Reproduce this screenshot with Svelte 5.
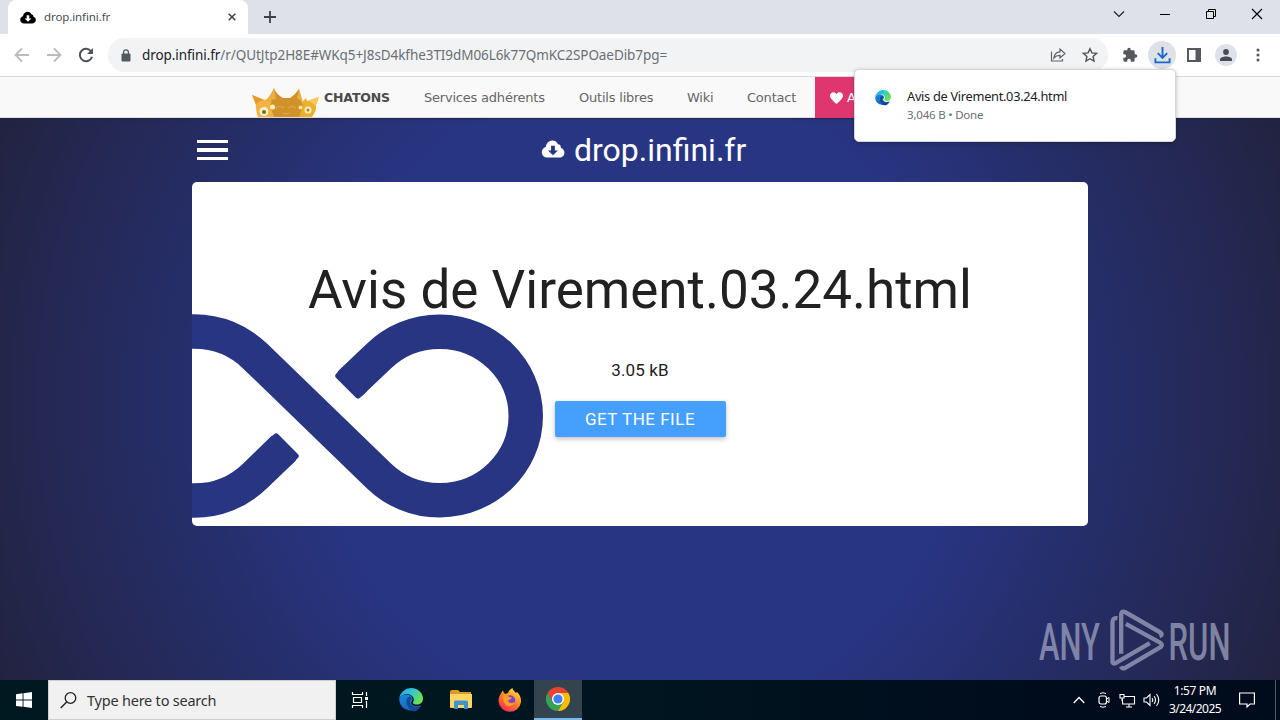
<script>
  const links = [
    { label: 'Services adhérents', width: 155 },
    { label: 'Outils libres', width: 108 },
    { label: 'Wiki', width: 60 },
    { label: 'Contact', width: 84 }
  ];
  const cloud =
    'M20.500 10.500Q21 7 17.500 6.500C16 1.500 8 1 5.500 6.500 4.500 8 5 9 4.500 9.500 1.500 10.500 0 13 .5 16 1 19 3.500 20.500 6 20.500H19c3 0 5.300-2 5.300-5 0-2.500-1.500-4.500-3.800-5zM17.500 13l-5.300 5-5.200-5h3.200V8h4v5z';
</script>

{#snippet edge(id)}
  <svg class="edge" viewBox="0 0 24 24">
    <defs>
      <linearGradient id="{id}a" x1="0" y1="0" x2="1" y2=".5">
        <stop offset="0" stop-color="#22a0ea" /><stop offset=".5" stop-color="#2fc5d6" /><stop offset="1" stop-color="#6ee052" />
      </linearGradient>
      <linearGradient id="{id}b" x1="0" y1="0" x2=".7" y2="1">
        <stop offset="0" stop-color="#168bdc" /><stop offset="1" stop-color="#1561c0" />
      </linearGradient>
    </defs>
    <path fill="url(#{id}b)" d="M.2 12C.6 8 4.500 6 8.500 6.500c3.500.4 5.300 3 5 5.300-.3 1.200-1.300 1.700-1.300 3 0 2.700 4.500 4.800 10 2.200A12 12 0 0 1 .2 12z" />
    <path fill="#134a8f" d="M9.500 9C6 11 6.500 21 15 23.400c3-.7 5.500-2.800 7-5.700-4.500 2.500-11 1-11-3.700 0-2 1-2.500 1.500-3.500C12 9 11 8.500 9.500 9z" />
    <path fill="url(#{id}a)" d="M.2 11A12 12 0 0 1 12 0c7.500 0 12 5.500 12 10.500 0 4-3 6-6 6-2.800 0-4.200-1-4.200-1.800 0-.7 1-1.200 1-3C14.800 8.500 11.500 6 8 6 4.500 6 1.200 8 .2 11z" />
  </svg>
{/snippet}

<div class="screen">
  <div class="tabs">
    <div class="tab">
      <svg class="fav" viewBox="0 2 24.500 19"><path d={cloud} fill="#000" fill-rule="evenodd" /></svg>
      <span class="tabname">drop.infini.fr</span>
      <svg class="x" viewBox="0 0 8 8"><path d="M.7.7l6.600 6.600M7.300.7L.7 7.300" stroke="#45484c" stroke-width="1.600" /></svg>
    </div>
    <svg class="plus" viewBox="0 0 12 12"><path d="M6 0v12M0 6h12" stroke="#3c4043" stroke-width="1.800" /></svg>
    <div class="winbtns">
      <svg viewBox="0 0 12 12"><path d="M1 3.500l5 5 5-5" stroke="#222" stroke-width="1.200" fill="none" /></svg>
      <svg viewBox="0 0 12 12"><path d="M1 6.500h10" stroke="#000" /></svg>
      <svg viewBox="0 0 12 12"><path d="M1.500 3.500h7v7h-7zM3.500 3.500v-2h7v7h-2" stroke="#000" fill="none" /></svg>
      <svg viewBox="0 0 12 12"><path d="M1 1l10 10M11 1L1 11" stroke="#000" stroke-width="1.200" /></svg>
    </div>
  </div>

  <div class="toolbar">
    <svg class="nav" viewBox="0 0 16 16"><path d="M15 8H2M8 1.500L1.500 8 8 14.500" stroke="#b9bbbe" stroke-width="1.800" fill="none" /></svg>
    <svg class="nav" viewBox="0 0 16 16"><path d="M1 8h13M8 1.500L14.500 8 8 14.500" stroke="#b9bbbe" stroke-width="1.800" fill="none" /></svg>
    <svg class="nav" viewBox="0 0 16 16"><path d="M13.200 4.500A6.200 6.200 0 1 0 14 9.800" stroke="#505458" stroke-width="2" fill="none" /><path d="M15 1v6H9z" fill="#505458" /></svg>
    <div class="omni">
      <svg class="lock" viewBox="0 0 10 13"><rect x=".5" y="4.500" width="9" height="8" rx="1" fill="#55595e" /><path d="M2.600 5V3.200a2.400 2.400 0 0 1 4.800 0V5" fill="none" stroke="#55595e" stroke-width="1.300" /></svg>
      <span class="url"><b>drop.infini.fr</b><span class="path">/r/QUtJtp2H8E#WKq5+J8sD4kfhe3TI9dM06L6k77QmKC2SPOaeDib7pg=</span></span>
      <svg class="share" viewBox="0 0 16 16"><path d="M1.500 4.500v9.500h11v-2M3.800 11c.6-4 3-6 6.200-6.200V2l5 4.500-5 4.500V8.300C7.500 8.200 5.500 9 3.800 11z" fill="none" stroke="#5f6368" stroke-width="1.200" /></svg>
      <svg class="star" viewBox="0 0 16 16"><path d="M8 1.700l1.900 4.200 4.600.5-3.400 3.100.9 4.500L8 11.700 4 14l.9-4.500L1.500 6.400l4.600-.5z" fill="none" stroke="#505458" stroke-width="1.400" /></svg>
    </div>
    <svg class="puzzle" viewBox="0 0 24 24"><path fill="#55595e" d="M20.500 11H19V7a2 2 0 0 0-2-2h-4V3.500a2.500 2.500 0 0 0-5 0V5H4a2 2 0 0 0-2 2v3.800h1.500a2.700 2.700 0 0 1 0 5.400H2V20a2 2 0 0 0 2 2h3.800v-1.500a2.700 2.700 0 0 1 5.400 0V22H17a2 2 0 0 0 2-2v-4h1.500a2.500 2.500 0 0 0 0-5z" /></svg>
    <div class="dl"><svg viewBox="0 0 18 18"><path d="M9 0v11M4 6.500l5 5 5-5M1.500 12v4.300h15V12" fill="none" stroke="#1967d2" stroke-width="2" /></svg></div>
    <svg class="panel" viewBox="0 0 14 14"><path d="M1 1h12v12H1z" fill="none" stroke="#55595e" stroke-width="2" /><path d="M8.500 1H13v12H8.500z" fill="#55595e" /></svg>
    <div class="avatar"><svg viewBox="0 0 14 14"><circle cx="7" cy="4" r="2.900" fill="#494c57" /><path d="M1 13v-1.500C1 9.500 4 8.500 7 8.500s6 1 6 3V13z" fill="#494c57" /></svg></div>
    <svg class="dots" viewBox="0 0 4 14"><circle cx="2" cy="2" r="1.500" /><circle cx="2" cy="7" r="1.500" /><circle cx="2" cy="12" r="1.500" /></svg>
  </div>

  <div class="sitebar">
    <svg class="cats" viewBox="0 0 68 29">
      <path d="M0 7l13 5q3-1 5-5l10 22H6q-3-9-2-13z" fill="#f3b243" />
      <path d="M0 7l12 5q-6 1-8 5z" fill="#e59a2c" />
      <path d="M67 9l-12 4-1-3-3 3-9 16h18q5-7 4-12z" fill="#eab12f" />
      <path d="M67 9l-4 9q-2-4-7-5z" fill="#f6ca58" />
      <path d="M22 0q2 6 9 10h7q6-4 9-9l4 18-4 10H22q-4-10-3-14z" fill="#d1922b" />
      <path d="M22 0l-7 13 9-2zM47 1l4 13-6-4z" fill="#eaae42" />
      <circle cx="12" cy="23.500" r="4.500" fill="#fff0c4" /><circle cx="12" cy="24" r="2" fill="#7b6534" />
      <circle cx="20.500" cy="19" r="2.500" fill="#fff0c4" /><circle cx="56" cy="22" r="3.500" fill="#fff0c4" /><circle cx="56" cy="22" r="1.500" fill="#a1802f" />
      <circle cx="48.500" cy="19.500" r="2" fill="#ffe5a0" />
      <path d="M24 20q4-3 8 0M36 20q4-3 8 0M31 25l3 1 3-1" fill="none" stroke="#e0aa45" stroke-width="1.200" />
    </svg>
    <b class="chatons">CHATONS</b>
    {#each links as l}<a style:width="{l.width}px">{l.label}</a>{/each}
    <div class="adhere"><svg viewBox="0 0 24 22"><path fill="#fff" d="M12 22C5 16 0 12 0 6.500 0 0 9-2.500 12 4c3-6.500 12-4 12 2.500C24 12 19 16 12 22z" /></svg>Adhérer</div>
  </div>

  <main>
    <header>
      <div class="burger"><i></i><i></i><i></i></div>
      <div class="brand"><svg viewBox="0 2 24.500 19"><path d={cloud} fill="#fff" fill-rule="evenodd" /></svg><span>drop.infini.fr</span></div>
    </header>
    <section>
      <svg class="infinity" viewBox="192 310 356 212">
        <g fill="none" stroke="#283583" stroke-width="34.500">
          <path d="M349.500 384.100L379 356A86.200 84.300 0 1 1 379 476L255 356A86.200 84.300 0 0 0 194 331.500H190" />
          <path d="M190 500.500h4A86.200 84.300 0 0 0 255 476l29-28" />
        </g>
        <g fill="#283583" stroke="#283583" stroke-width="6" stroke-linejoin="round">
          <path d="M338.300 375.900l19.600 19.600 6-5.500-19.800-20z" />
          <path d="M295.700 456l-19.600-19.600-6 5.500 19.800 20z" />
        </g>
      </svg>
      <h1>Avis de Virement.03.24.html</h1>
      <p>3.05 kB</p>
      <button>GET THE FILE</button>
    </section>
    <svg class="anyrun" viewBox="0 0 206 66">
      <text x="1" y="53" textLength="61" lengthAdjust="spacingAndGlyphs">ANY</text>
      <text x="130.500" y="53" textLength="62" lengthAdjust="spacingAndGlyphs">RUN</text>
      <g transform="translate(-8.500 -7.500) scale(.33333)" fill="none" stroke="#a3a7c2" stroke-opacity=".72" stroke-width="13" stroke-linejoin="round">
        <path d="M264 56q-15-2-15 12v120q3 8 14 0l98-57" />
        <path d="M275 163V47q0-16 14-8l104 60q8 7-3 11" />
        <path d="M289 73l104 57q8 7 0 13l-106 62q-8 5-13-4" />
      </g>
    </svg>
  </main>

  <footer>
    <div class="start"><svg viewBox="0 0 16 16"><path fill="#fff" d="M0 2.200l6.600-.9v6.300H0zM7.500 1.200L16 0v7.600H7.500zM0 8.500h6.600v6.300L0 13.900zM7.500 8.500H16V16l-8.500-1.200z" /></svg></div>
    <div class="search">
      <svg viewBox="0 0 17 17"><circle cx="10.500" cy="6" r="5.300" fill="none" stroke="#222" stroke-width="1.300" /><path d="M6.700 10L.7 16" stroke="#222" stroke-width="1.400" /></svg>
      <span>Type here to search</span>
    </div>
    <div class="app task"><svg width="18" height="18" viewBox="0 0 18 18"><path d="M1.500 1v2.500h10V1M1.500 17v-2.500h10V17M2.500 6.500h8v5h-8zM15.500 1v4M15.500 10v7" fill="none" stroke="#fff" stroke-width="1.200" /><path d="M14 6h3v3h-3z" fill="#fff" /></svg></div>
    <div class="app e">{@render edge('t')}</div>
    <div class="app"><svg width="22" height="20" viewBox="0 0 22 20"><path d="M0 2q0-2 2-2h6l2 2h11v4H0z" fill="#dd9b25" /><path d="M0 4h22v13q0 1-1 1H1q-1 0-1-1z" fill="#ffd563" /><path d="M4 19v-7q0-1.500 1.500-1.500h11q1.500 0 1.500 1.500v7h-4v-4H8v4z" fill="#3e93cf" /></svg></div>
    <div class="app"><svg width="24" height="24" viewBox="0 0 24 24">
      <defs><linearGradient id="ff" x1=".8" y1="0" x2=".2" y2="1"><stop offset="0" stop-color="#ffe64a" /><stop offset=".45" stop-color="#ff8a24" /><stop offset="1" stop-color="#f5215b" /></linearGradient></defs>
      <path fill="url(#ff)" d="M3 5.500l1.500-3L7 6l3-1c1-3 3-4 4.500-5 0 2 2 3 3.500 5l1-1c2 2 4.500 5.500 4 10a11.300 11.300 0 0 1-22.500-1C.5 10 1.500 7.500 3 5.500z" />
      <circle cx="12" cy="12.500" r="5.200" fill="#8042ce" /><path fill="#ff9c27" d="M5 7c3-1 5 0 6 2l3 .5c-1 2-3 2-4 3 1 3 4 3 7 1.500-1 4-7 6-10 2-2-3-2-6-2-9z" />
    </svg></div>
    <div class="app active"><svg width="24" height="24" viewBox="0 0 24 24">
      <path fill="#34a353" d="M12 24A12 12 0 0 1 1.600 6L7 15l5 3 5-3z" /><path fill="#e94235" d="M12 6h10.400A12 12 0 0 0 1.600 6l5.200 9z" /><path fill="#fbbc04" d="M12 6h10.400A12 12 0 0 1 12 24l5.200-9z" />
      <circle cx="12" cy="12" r="6" fill="#fff" /><circle cx="12" cy="12" r="4.600" fill="#3c83f1" />
    </svg></div>
    <div class="tray">
      <svg class="up" width="12" height="8" viewBox="0 0 12 8"><path d="M.7 7L6 1.500 11.300 7" fill="none" stroke="#fff" stroke-width="1.300" /></svg>
      <svg class="cam" width="12" height="16" viewBox="0 0 12 16"><rect x="1" y="4" width="7.500" height="8" rx="2" fill="none" stroke="#fff" stroke-width="1.200" /><path d="M8.500 7L11 5.500v5L8.500 9M2 1.500q3-1.500 6 0M2 14.500q3 1.500 6 0" fill="none" stroke="#fff" /></svg>
      <svg width="17" height="15" viewBox="0 0 17 15"><path d="M5 3.500h10.500v7.500H3.500V6M7 14h6M10 11v3M1 1.500h4v3.500H1zM3 5v3" fill="none" stroke="#fff" stroke-width="1.100" /></svg>
      <svg width="17" height="14" viewBox="0 0 17 14"><path d="M1 5h2.500L7 1.500v11L3.500 9H1zM9 5q1.500 2 0 4M11 3q3 4 0 8M13.500 1q4.500 6 0 12" fill="none" stroke="#fff" stroke-width="1.100" /></svg>
    </div>
    <div class="clock"><span>1:57 PM</span><span class="date">3/24/2025</span></div>
    <svg class="note" viewBox="0 0 16 16"><path d="M.6 1h14.800v11H11l-3 3v-3H.6z" fill="none" stroke="#fff" stroke-width="1.200" /></svg>
    <div class="peek"></div>
  </footer>

  <aside>
    {@render edge('p')}
    <div><span class="file">Avis de Virement.03.24.html</span><span class="meta">3,046 B • Done</span></div>
  </aside>
</div>

<style>
  :global(body) { overflow: hidden; }
  .screen { position: relative; width: 1280px; height: 720px; display: flex; flex-direction: column; overflow: hidden; font-family: "Noto Sans", "Open Sans", sans-serif; }
  .screen * { box-sizing: border-box; }
  svg { display: block; flex: none; }
  span { white-space: nowrap; }
  .tabs { height: 34px; background: #dee1e9; display: flex; align-items: center; flex: none; padding-left: 8px; }
  .tab { width: 240px; height: 34px; background: #fff; border-radius: 8px 8px 0 0; display: flex; align-items: center; padding: 0 12px; flex: none; }
  .fav { width: 16px; height: 13px; }
  .tabname { font-size: 11.500px; letter-spacing: -.1px; color: #4a4d51; margin: -2px 0 0 8px; flex: 1; }
  .x { width: 8px; height: 8px; }
  .plus { width: 12px; height: 12px; margin-left: 16px; }
  .winbtns { margin-left: auto; display: flex; gap: 34px; padding: 0 17px 6px 0; }
  .winbtns svg { width: 12px; height: 12px; }
  .toolbar { height: 43px; background: #fff; border-bottom: 1px solid #d8d9dc; display: flex; align-items: center; flex: none; padding-left: 14px; }
  .nav { width: 16px; height: 16px; margin-right: 16px; }
  .omni { width: 1000px; height: 34px; border-radius: 17px; background: #f1f3f4; display: flex; align-items: center; margin-left: -2px; padding: 0 10px 0 13px; }
  .lock { width: 10px; height: 13px; }
  .url { font-size: 13.500px; letter-spacing: -.07px; color: #6b6f74; margin-left: 11px; flex: 1; }
  .url b { font-weight: 400; color: #202124; }
  .share { width: 16px; height: 16px; margin-right: 16px; }
  .star { width: 16px; height: 16px; }
  .puzzle { width: 16px; height: 16px; margin-left: 14px; }
  .dl { width: 28px; height: 28px; border-radius: 50%; background: #dee1e6; display: grid; place-items: center; margin-left: 10px; }
  .dl svg { width: 17px; height: 17px; }
  .panel { width: 14px; height: 14px; margin-left: 11px; }
  .avatar { width: 22px; height: 22px; border-radius: 50%; background: #dee1e9; display: grid; place-items: center; margin-left: 14px; }
  .avatar svg { width: 14px; height: 14px; }
  .dots { width: 4px; height: 14px; margin-left: 19px; fill: #505458; }
  .sitebar { height: 41px; background: #f9f9f9; border-bottom: 1px solid #ddd; flex: none; display: flex; align-items: center; padding-left: 252px; font: 13px "DejaVu Sans", sans-serif; color: #666; }
  .cats { width: 68px; height: 29px; align-self: flex-end; }
  .chatons { width: 87px; margin-left: 4px; font-size: 12.500px; letter-spacing: -.15px; color: #4a4a4a; }
  .sitebar a { box-sizing: border-box; padding-left: 13px; white-space: nowrap; flex: none; letter-spacing: -.21px; }
  .adhere { position: relative; align-self: stretch; width: 120px; height: 41px; background: #df3670; color: #fff; display: flex; align-items: center; gap: 4px; padding-left: 15px; margin-left: -3px; }
  .adhere svg { width: 13px; height: 12px; }
  main { height: 562px; flex: none; display: flex; flex-direction: column; padding: 0 192px; background: radial-gradient(circle 720px at 50% 50%, #283583 0, #283583 44%, #22223d 100%); box-shadow: inset 0 2px 2px -1px #222244; }
  header { height: 64px; display: flex; align-items: center; padding-left: 5px; flex: none; }
  .burger { width: 31px; display: flex; flex-direction: column; gap: 5px; }
  .burger i { height: 3.400px; background: #fff; }
  .brand { display: flex; align-items: center; margin: -1px 0 0 313px; color: #fff; font: 32px Roboto, sans-serif; gap: 9px; }
  .brand svg { width: 24px; height: 18px; margin-top: -2px; }
  section { position: relative; height: 344px; background: #fff; border-radius: 5px; flex: none; display: flex; flex-direction: column; align-items: center; font-family: Roboto, sans-serif; color: #212121; }
  .infinity { position: absolute; left: 0; bottom: 4px; width: 356px; height: 212px; }
  h1 { margin: 77px 0 0; font-size: 53px; line-height: 62px; font-weight: 400; position: relative; white-space: nowrap; }
  p { margin: 39px 0 0; font-size: 17px; line-height: 20px; letter-spacing: .15px; }
  button { margin-top: 21px; width: 171px; height: 36px; border: 0; border-radius: 2px; background: #459ffc; color: #fff; font: 17px Roboto, sans-serif; letter-spacing: .5px; box-shadow: 0 2px 5px rgba(0,0,0,.26); padding: 0; }
  .anyrun { width: 206px; height: 66px; margin: 81px -156px 0 auto; }
  .anyrun text { font: 500 52px Roboto, sans-serif; fill: #a3a7c2; fill-opacity: .72; }
  footer { height: 40px; flex: none; display: flex; background: linear-gradient(90deg, #001921 0, #00151f 50%, #000b1c 85%); color: #fff; }
  .start { width: 48px; display: grid; place-items: center; }
  .start svg { width: 16px; height: 16px; }
  .search { width: 288px; background: #f1f1f1; border: 1px solid #cfcfcf; display: flex; align-items: center; padding-left: 11px; gap: 10px; color: #333; font-size: 14.500px; letter-spacing: -.22px; }
  .search svg { width: 17px; height: 17px; }
  .app { width: 49px; display: grid; place-items: center; }
  .task { width: 50px; padding-right: 2px; }
  .e { width: 50px; }
  .active { width: 48px; background: #33444f; border-bottom: 2px solid #76b9ed; }
  .e .edge { width: 24px; height: 24px; }
  .tray { margin-left: auto; display: flex; align-items: center; gap: 7px; }
  .up { margin-right: 6px; }
  .cam { margin-right: 2px; }
  .clock { width: 70px; display: flex; flex-direction: column; align-items: center; font-size: 12px; line-height: 18px; padding-top: 2px; letter-spacing: -.35px; }
  .date { letter-spacing: -.55px; }
  .note { width: 16px; height: 16px; margin: 12px 20px 0 9px; }
  .peek { width: 5px; border-left: 1px solid #4c5561; }
  aside { position: absolute; left: 854px; top: 69px; width: 322px; height: 73px; background: #fff; border: 1px solid #d4d6da; border-radius: 5px; box-shadow: 0 1px 4px rgba(0,0,0,.25); display: flex; padding: 19px 20px; gap: 16px; }
  aside .edge { width: 16px; height: 16px; margin-top: 1px; }
  aside div { display: flex; flex-direction: column; }
  .file { font-size: 12.800px; letter-spacing: -.3px; line-height: 16px; margin-top: -1px; color: #202124; }
  .meta { font-size: 11.500px; letter-spacing: -.2px; line-height: 20px; margin-top: 1px; color: #6b6f74; }
</style>
